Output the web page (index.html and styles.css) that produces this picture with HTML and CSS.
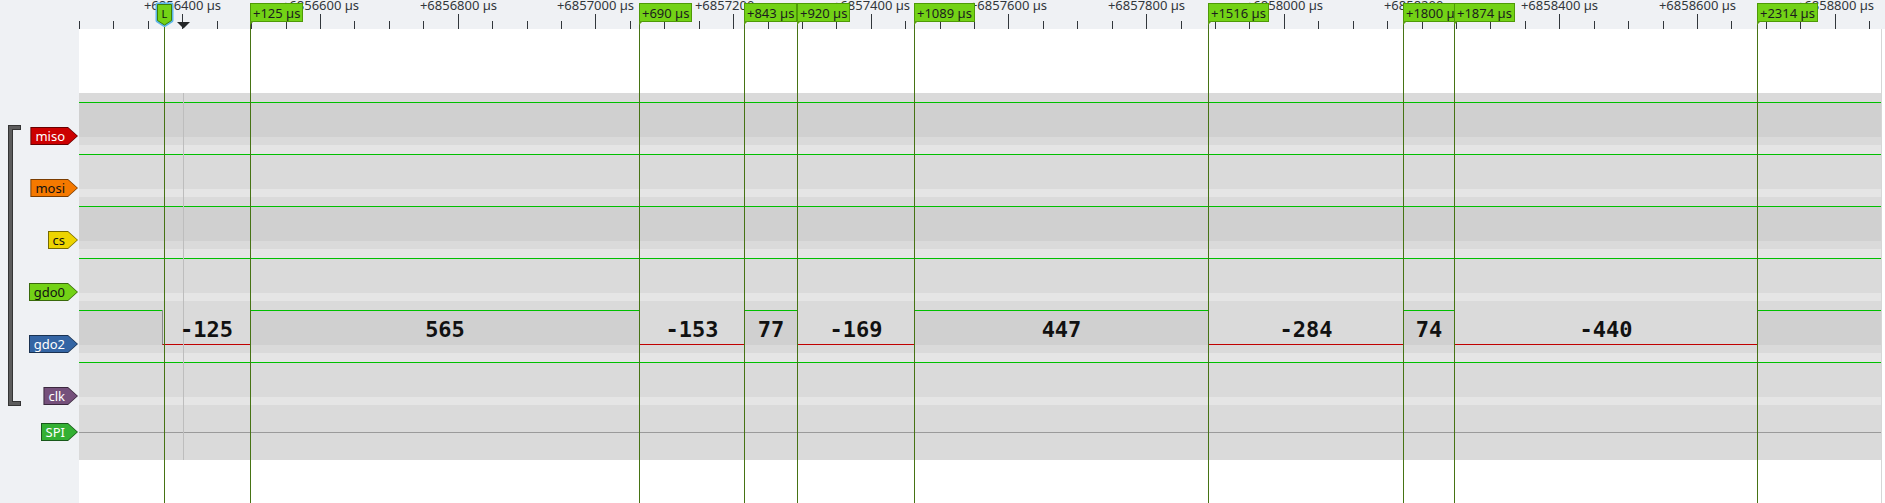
FILE: index.html
```html
<!DOCTYPE html>
<html lang="en">
<head>
<meta charset="utf-8">
<title>PulseView</title>
<link rel="stylesheet" href="styles.css">
</head>
<body>
<div class="app">
  <div class="ruler">
    <svg class="ruler-svg" width="1885" height="29" viewBox="0 0 1885 29">
      <path class="ticks" d="M79.5 21V29M113.5 21V29M148.5 21V29M217.5 21V29M251.5 21V29M286.5 21V29M354.5 21V29M389.5 21V29M423.5 21V29M492.5 21V29M527.5 21V29M561.5 21V29M630.5 21V29M664.5 21V29M699.5 21V29M768.5 21V29M802.5 21V29M836.5 21V29M905.5 21V29M940.5 21V29M974.5 21V29M1043.5 21V29M1077.5 21V29M1112.5 21V29M1181.5 21V29M1215.5 21V29M1249.5 21V29M1318.5 21V29M1353.5 21V29M1387.5 21V29M1456.5 21V29M1490.5 21V29M1525.5 21V29M1594.5 21V29M1628.5 21V29M1663.5 21V29M1731.5 21V29M1766.5 21V29M1800.5 21V29M1869.5 21V29"/>
      <path class="ticks" d="M182.5 14V29M320.5 14V29M458.5 14V29M595.5 14V29M733.5 14V29M871.5 14V29M1008.5 14V29M1146.5 14V29M1284.5 14V29M1422.5 14V29M1559.5 14V29M1697.5 14V29M1835.5 14V29"/>
      <text class="rlabel" x="182.5" y="9.5">+6856400 µs</text>
      <text class="rlabel" x="320.5" y="9.5">+6856600 µs</text>
      <text class="rlabel" x="458.5" y="9.5">+6856800 µs</text>
      <text class="rlabel" x="595.5" y="9.5">+6857000 µs</text>
      <text class="rlabel" x="733.5" y="9.5">+6857200 µs</text>
      <text class="rlabel" x="871.5" y="9.5">+6857400 µs</text>
      <text class="rlabel" x="1008.5" y="9.5">+6857600 µs</text>
      <text class="rlabel" x="1146.5" y="9.5">+6857800 µs</text>
      <text class="rlabel" x="1284.5" y="9.5">+6858000 µs</text>
      <text class="rlabel" x="1422.5" y="9.5">+6858200 µs</text>
      <text class="rlabel" x="1559.5" y="9.5">+6858400 µs</text>
      <text class="rlabel" x="1697.5" y="9.5">+6858600 µs</text>
      <text class="rlabel" x="1835.5" y="9.5">+6858800 µs</text>
      <polygon class="trig" points="177,22 190,22 183.5,28.5"/>
    </svg>
    <svg class="lflag" width="21" height="28" viewBox="154 0 21 28">
      <path class="lflag-halo" d="M157.5 4.5H171.5V20.5L164.5 25L157.5 20.5Z"/>
      <path class="lflag-body" d="M157.5 4.5H171.5V20.5L164.5 25L157.5 20.5Z"/>
      <text class="lflag-text" x="164.5" y="17.5">L</text>
    </svg>
    <div class="flag" style="left:250px">+125 µs</div>
    <div class="flag" style="left:639px">+690 µs</div>
    <div class="flag" style="left:744px">+843 µs</div>
    <div class="flag" style="left:797px">+920 µs</div>
    <div class="flag" style="left:914px">+1089 µs</div>
    <div class="flag" style="left:1208px">+1516 µs</div>
    <div class="flag" style="left:1403px">+1800 µs</div>
    <div class="flag" style="left:1454px">+1874 µs</div>
    <div class="flag" style="left:1757px">+2314 µs</div>
  </div>

  <div class="main">
    <div class="panel">
      <div class="group">
        <svg class="bracket" width="22" height="281" viewBox="0 125 22 281">
          <path class="br-out" d="M21 127.5H10.5V403.5H21"/>
          <path class="br-in" d="M20 127.5H10.5V403.5H20"/>
        </svg>
        <div class="tags">
          <div class="tag t-red"><span>miso</span></div>
          <div class="tag t-orange"><span>mosi</span></div>
          <div class="tag t-yellow"><span>cs</span></div>
          <div class="tag t-green"><span>gdo0</span></div>
          <div class="tag t-blue"><span>gdo2</span></div>
          <div class="tag t-purple"><span>clk</span></div>
        </div>
      </div>
      <div class="tag t-spi spi-tag"><span>SPI</span></div>
    </div>

    <div class="traces">
      <div class="trigline"></div>
      <div class="blank-top"></div>
      <div class="band h9 c-m"></div>

      <div class="trace">
        <div class="band h34 c-d"></div>
        <div class="band h8 c-m"></div>
        <div class="band h9 c-l"></div>
      </div>
      <div class="trace">
        <div class="band h34 c-m"></div>
        <div class="band h8 c-l"></div>
        <div class="band h9 c-m"></div>
      </div>
      <div class="trace">
        <div class="band h34 c-d"></div>
        <div class="band h8 c-m"></div>
        <div class="band h9 c-l"></div>
      </div>
      <div class="trace">
        <div class="band h34 c-m"></div>
        <div class="band h8 c-l"></div>
        <div class="band h9 c-m"></div>
      </div>

      <div class="segs">
        <div class="seg hi" style="width:83px"></div>
        <div class="seg lo" style="width:88px"><span class="num">-125</span></div>
        <div class="seg hi" style="width:389px"><span class="num">565</span></div>
        <div class="seg lo" style="width:105px"><span class="num">-153</span></div>
        <div class="seg hi" style="width:53px"><span class="num">77</span></div>
        <div class="seg lo" style="width:117px"><span class="num">-169</span></div>
        <div class="seg hi" style="width:294px"><span class="num">447</span></div>
        <div class="seg lo" style="width:195px"><span class="num">-284</span></div>
        <div class="seg hi" style="width:51px"><span class="num">74</span></div>
        <div class="seg lo" style="width:303px"><span class="num">-440</span></div>
        <div class="seg hi" style="width:124px"></div>
      </div>
      <div class="band h8 c-m"></div>
      <div class="band h9 c-l"></div>

      <div class="trace">
        <div class="band h34 c-m"></div>
        <div class="band h8 c-l"></div>
      </div>

      <div class="spi-row"><div class="spi-line"></div></div>
      <div class="blank-bottom"></div>
    </div>
    <div class="vsep"></div>
    <div class="filler"></div>
  </div>

  <div class="cursors">
    <div class="cur cur-l" style="left:164px"></div>
    <div class="cur" style="left:250px"></div>
    <div class="cur" style="left:639px"></div>
    <div class="cur" style="left:744px"></div>
    <div class="cur" style="left:797px"></div>
    <div class="cur" style="left:914px"></div>
    <div class="cur" style="left:1208px"></div>
    <div class="cur" style="left:1403px"></div>
    <div class="cur" style="left:1454px"></div>
    <div class="cur" style="left:1757px"></div>
  </div>
</div>
</body>
</html>
```

FILE: styles.css
```css
html, body {
  margin: 0;
  padding: 0;
  background: #ffffff;
}

.app {
  position: relative;
  width: 1885px;
  height: 503px;
  overflow: hidden;
  display: flex;
  flex-direction: column;
  font-family: "Noto Sans", "DejaVu Sans", sans-serif;
}

/* ---------- ruler ---------- */
.ruler {
  position: relative;
  flex: none;
  height: 29px;
  background: #eff1f4;
}

.ruler-svg {
  display: block;
}

.ticks {
  stroke: #31363b;
  stroke-width: 1;
  fill: none;
  shape-rendering: crispEdges;
}

.rlabel {
  font-family: "Noto Sans", sans-serif;
  font-size: 13px;
  fill: #31363b;
  text-anchor: middle;
}

.trig {
  fill: #232627;
}

.lflag {
  position: absolute;
  left: 154px;
  top: 0;
  z-index: 3;
}

.lflag-halo {
  fill: #5cb6e8;
  stroke: #5cb6e8;
  stroke-width: 4;
  stroke-linejoin: round;
}

.lflag-body {
  fill: #73d216;
  stroke: #3f7d08;
  stroke-width: 1;
}

.lflag-text {
  font-family: "Noto Sans", sans-serif;
  font-size: 11px;
  fill: #111111;
  text-anchor: middle;
}

.flag {
  position: absolute;
  top: 3px;
  z-index: 3;
  box-sizing: border-box;
  height: 19px;
  padding: 0 2px;
  border: 1px solid #4e9a06;
  background: #73d216;
  color: #1b1d1e;
  font-size: 13px;
  line-height: 18px;
  white-space: nowrap;
}

.flag::after {
  content: "";
  position: absolute;
  left: -1px;
  top: 100%;
  width: 4px;
  height: 4px;
  background: #5a9e12;
  clip-path: polygon(0 0, 100% 0, 0 100%);
}

/* ---------- main area ---------- */
.main {
  flex: 1;
  display: flex;
}

.panel {
  flex: none;
  width: 79px;
  box-sizing: border-box;
  padding-top: 96px;
  background: #eff1f4;
  display: flex;
  flex-direction: column;
}

.group {
  display: flex;
  height: 281px;
}

.bracket {
  flex: none;
  display: block;
}

.br-out {
  fill: none;
  stroke: #343434;
  stroke-width: 5;
  stroke-linejoin: miter;
}

.br-in {
  fill: none;
  stroke: #5c5c5c;
  stroke-width: 3;
  stroke-linejoin: miter;
}

.tags {
  flex: 1;
  display: flex;
  flex-direction: column;
  align-items: flex-end;
  gap: 34px;
  padding-top: 2px;
  padding-right: 1px;
}

.tag {
  padding: 1px;
  background: var(--bd);
  clip-path: polygon(0 0, calc(100% - 10px) 0, 100% 50%, calc(100% - 10px) 100%, 0 100%);
}

.tag span {
  display: block;
  height: 16px;
  padding: 0 12px 0 4px;
  background: var(--fill);
  color: var(--fg);
  font-size: 13px;
  line-height: 16px;
  clip-path: polygon(0 0, calc(100% - 9px) 0, 100% 50%, calc(100% - 9px) 100%, 0 100%);
}

.spi-tag {
  align-self: flex-end;
  margin-top: 17px;
  margin-right: 1px;
}

.t-red    { --fill: #cc0000; --bd: #660000; --fg: #ffffff; }
.t-orange { --fill: #f57900; --bd: #7a3c00; --fg: #111111; }
.t-yellow { --fill: #edd400; --bd: #766a00; --fg: #111111; }
.t-green  { --fill: #73d216; --bd: #39690b; --fg: #111111; }
.t-blue   { --fill: #3465a4; --bd: #1a3252; --fg: #ffffff; }
.t-purple { --fill: #75507b; --bd: #3a283d; --fg: #ffffff; }
.t-spi    { --fill: #33b033; --bd: #18581a; --fg: #ffffff; }

/* ---------- traces ---------- */
.traces {
  position: relative;
  flex: none;
  width: 1802px;
  display: flex;
  flex-direction: column;
}

.trigline {
  position: absolute;
  left: 104px;
  top: 64px;
  width: 1px;
  height: 367px;
  background: #bdbdbd;
}

.blank-top {
  flex: none;
  height: 64px;
  background: #ffffff;
}

.blank-bottom {
  flex: 1;
  background: #ffffff;
}

.band {
  flex: none;
}

.h8 { height: 8px; }
.h9 { height: 9px; }
.h34 { height: 34px; }

.c-d { background: #d0d0d0; }
.c-m { background: #dadada; }
.c-l { background: #e5e5e5; }

.trace {
  flex: none;
  border-top: 1px solid #00c000;
}

.segs {
  flex: none;
  display: flex;
  height: 35px;
}

.seg {
  flex: none;
  box-sizing: border-box;
  height: 35px;
  display: flex;
  justify-content: center;
  border-left: 1px solid #8a8a8a;
}

.seg:first-child {
  border-left: none;
}

.seg.hi {
  background: #d0d0d0;
  border-top: 1px solid #00c000;
  padding-top: 6px;
}

.seg.lo {
  background: #dadada;
  border-bottom: 1px solid #c00000;
  padding-top: 7px;
}

.num {
  position: relative;
  font-family: "DejaVu Sans Mono", monospace;
  font-weight: bold;
  font-size: 22px;
  line-height: 26px;
  color: #111111;
  white-space: nowrap;
}

.spi-row {
  flex: none;
  height: 55px;
  background: #dadada;
  display: flex;
  align-items: center;
}

.spi-line {
  width: 100%;
  height: 1px;
  background: #9a9a9a;
}

.vsep {
  flex: none;
  width: 1px;
  background: #d6d6d6;
}

.filler {
  flex: 1;
  background: #ffffff;
}

/* ---------- cursor lines ---------- */
.cursors {
  position: absolute;
  left: 0;
  top: 0;
  width: 100%;
  height: 100%;
  pointer-events: none;
  z-index: 2;
}

.cur {
  position: absolute;
  top: 22px;
  bottom: 0;
  width: 1px;
  background: #467314;
}

.cur-l {
  top: 26px;
}
```
